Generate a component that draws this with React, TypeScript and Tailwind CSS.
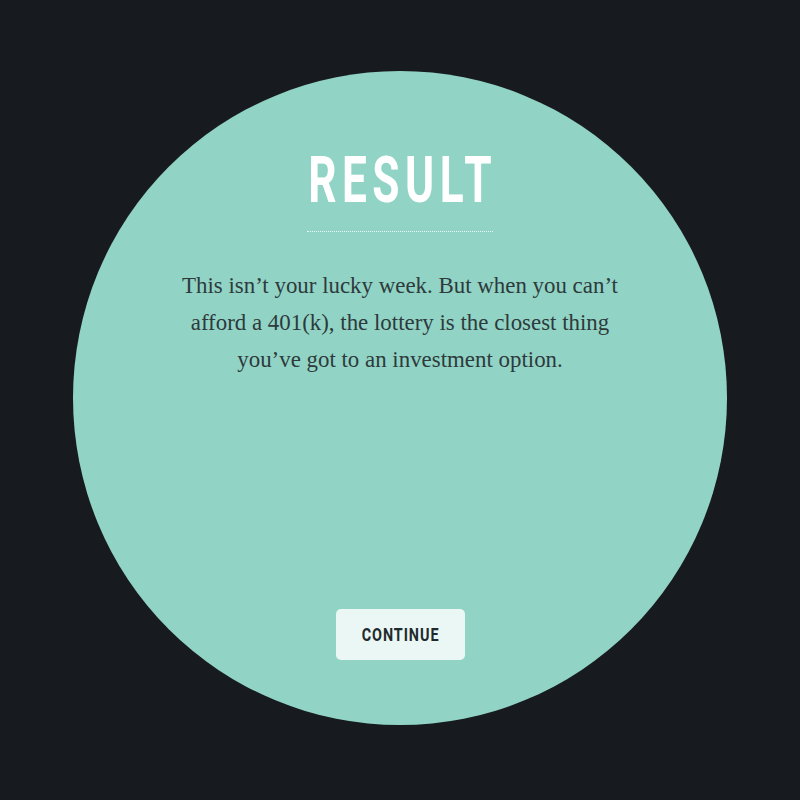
export default function App() {
  return (
    <div className="w-[800px] h-[800px] bg-[#171b1f] flex justify-center pt-[71px]">
      <div className="w-[654px] h-[654px] rounded-full bg-[#91d4c6] flex flex-col items-center">
        <h1
          className="mt-[78px] h-[64px] text-white text-[64px] leading-none tracking-[8px] pl-[8px] font-bold scale-x-[0.69] whitespace-nowrap"
          style={{ fontFamily: 'Roboto, sans-serif' }}
        >
          RESULT
        </h1>
        <div className="mt-[18px] w-[186px] border-t border-dotted border-white/80" />
        <p
          className="mt-[35px] text-center text-[#2e3a3b] text-[22.9px] leading-[37px] whitespace-nowrap"
          style={{ fontFamily: '"Liberation Serif", serif' }}
        >
          This isn’t your lucky week. But when you can’t
          <br />
          afford a 401(k), the lottery is the closest thing
          <br />
          you’ve got to an investment option.
        </p>
        <button
          className="mt-auto mb-[65px] w-[129px] h-[51px] rounded-[5px] bg-[#eaf7f4] flex items-center justify-center"
        >
          <span
            className="text-[#1f2a2d] text-[18px] font-bold tracking-[1.2px] pl-[1px] scale-x-[0.8] whitespace-nowrap leading-none"
            style={{ fontFamily: 'Roboto, sans-serif' }}
          >
            CONTINUE
          </span>
        </button>
      </div>
    </div>
  );
}
